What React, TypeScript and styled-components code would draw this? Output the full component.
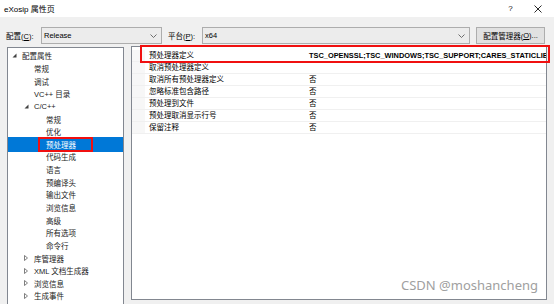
import React from 'react';
import styled, { createGlobalStyle } from 'styled-components';

// ── Global ─────────────────────────────────────────────────────────────────────

const GlobalStyle = createGlobalStyle`
  html, body {
    margin: 0;
    padding: 0;
  }
  body {
    width: 554px;
    height: 304px;
    overflow: hidden;
    background: #f0f0f0;
    font-family: "Liberation Sans", "Noto Sans CJK SC", sans-serif;
    color: #000;
  }
  * {
    box-sizing: border-box;
  }
`;

// ── Window chrome ──────────────────────────────────────────────────────────────

const Window = styled.div`
  display: flex;
  flex-direction: column;
  width: 554px;
  height: 304px;
  background: #f0f0f0;
  overflow: hidden;
`;

const TitleBar = styled.div`
  display: flex;
  align-items: center;
  height: 17px;
  padding: 0 3px 0 4px;
  background: #fff;
  font-size: 8px;
`;

const Title = styled.span`
  flex: 1;
`;

const TitleButton = styled.div`
  display: flex;
  align-items: center;
  justify-content: center;
  width: 27px;
  height: 17px;
  font-size: 8px;
  color: #111;
`;

// ── Toolbar ────────────────────────────────────────────────────────────────────

const Toolbar = styled.div`
  display: flex;
  align-items: center;
  height: 17px;
  margin: 10px 0 2px 6px;
  font-size: 7.5px;
`;

const Label = styled.span<{ $w: number }>`
  width: ${(p) => p.$w}px;
  white-space: nowrap;
`;

const Select = styled.div<{ $w: number }>`
  display: flex;
  align-items: center;
  justify-content: space-between;
  width: ${(p) => p.$w}px;
  height: 17px;
  margin-right: 6px;
  padding: 0 4px 0 2px;
  background: #ececec;
  border: 1px solid #adadad;
`;

const Button = styled.div`
  display: flex;
  align-items: center;
  justify-content: center;
  width: 69px;
  height: 17px;
  background: #e1e1e1;
  border: 1px solid #adadad;
  white-space: nowrap;
`;

// ── Panels ─────────────────────────────────────────────────────────────────────

const Main = styled.div`
  display: flex;
  align-items: flex-start;
  gap: 7px;
  padding-left: 7px;
`;

const TreePanel = styled.div`
  width: 117px;
  height: 270px;
  margin-top: 1px;
  padding-top: 1.5px;
  background: #fff;
  border: 1px solid #828790;
  overflow: hidden;
`;

const TreeRow = styled.div<{ $level: number; $selected?: boolean }>`
  position: relative;
  display: flex;
  align-items: center;
  height: 12.65px;
  padding-left: ${(p) => 1 + p.$level * 12}px;
  font-size: 7.5px;
  white-space: nowrap;
  color: ${(p) => (p.$selected ? '#fff' : '#1a1a1a')};
  background: ${(p) => (p.$selected ? '#0078d7' : 'transparent')};
  box-shadow: ${(p) =>
    p.$selected ? '0 -1px 0 #0078d7, 0 1px 0 #0078d7' : 'none'};
`;

const Toggle = styled.span`
  display: flex;
  align-items: center;
  justify-content: center;
  width: 10px;
  margin-right: 3px;
`;

const TreeMark = styled.div`
  position: absolute;
  left: 30px;
  top: -1px;
  width: 55px;
  height: 15px;
  border: 2px solid #f01010;
`;

const GridPanel = styled.div`
  position: relative;
  width: 416px;
  height: 254px;
  background: #fff;
  border: 1px solid #828790;
`;

const GridBody = styled.div`
  height: 100%;
  padding-top: 3px;
  overflow: hidden;
`;

const GridRow = styled.div`
  display: grid;
  grid-template-columns: 13px 161px 1fr;
  height: 12px;
  font-size: 7.5px;
  line-height: 11px;
  border-bottom: 1px solid #f0f0f0;
`;

const Gutter = styled.div`
  background: #f7f7f7;
`;

const NameCell = styled.div`
  padding-left: 4px;
  white-space: nowrap;
  overflow: hidden;
`;

const ValueCell = styled.div<{ $bold?: boolean }>`
  padding-left: 3px;
  white-space: nowrap;
  overflow: hidden;
  font-weight: ${(p) => (p.$bold ? 700 : 400)};
  font-size: ${(p) => (p.$bold ? '7.4px' : '7.5px')};
`;

const GridMark = styled.div`
  position: absolute;
  left: 8px;
  top: -2px;
  width: 410px;
  height: 18px;
  border: 2px solid #f01010;
`;

const Watermark = styled.div`
  position: absolute;
  right: 8px;
  bottom: 6px;
  font-family: "Noto Sans", sans-serif;
  font-size: 13px;
  line-height: 16px;
  color: #a0a0a0;
`;

// ── Icons ──────────────────────────────────────────────────────────────────────

const Chevron = () => (
  <svg width="7" height="4" viewBox="0 0 7 4">
    <polyline points="0.5,0.5 3.5,3.5 6.5,0.5" fill="none" stroke="#606060" strokeWidth="0.9" />
  </svg>
);

const CloseIcon = () => (
  <svg width="8" height="8" viewBox="0 0 8 8">
    <path d="M0.5 0.5L7.5 7.5M7.5 0.5L0.5 7.5" stroke="#111" strokeWidth="0.9" />
  </svg>
);

const Expanded = () => (
  <svg width="5" height="5" viewBox="0 0 5 5">
    <polygon points="4.5,0.5 4.5,4.5 0.5,4.5" fill="#404040" />
  </svg>
);

const Collapsed = () => (
  <svg width="4" height="6" viewBox="0 0 4 6">
    <polygon points="0.5,0.5 3.5,3 0.5,5.5" fill="none" stroke="#606060" strokeWidth="0.8" />
  </svg>
);

// ── Data ───────────────────────────────────────────────────────────────────────

type TreeItem = { text: string; level: number; toggle?: 'open' | 'closed'; selected?: boolean };

const tree: TreeItem[] = [
  { text: '配置属性', level: 0, toggle: 'open' },
  { text: '常规', level: 1 },
  { text: '调试', level: 1 },
  { text: 'VC++ 目录', level: 1 },
  { text: 'C/C++', level: 1, toggle: 'open' },
  { text: '常规', level: 2 },
  { text: '优化', level: 2 },
  { text: '预处理器', level: 2, selected: true },
  { text: '代码生成', level: 2 },
  { text: '语言', level: 2 },
  { text: '预编译头', level: 2 },
  { text: '输出文件', level: 2 },
  { text: '浏览信息', level: 2 },
  { text: '高级', level: 2 },
  { text: '所有选项', level: 2 },
  { text: '命令行', level: 2 },
  { text: '库管理器', level: 1, toggle: 'closed' },
  { text: 'XML 文档生成器', level: 1, toggle: 'closed' },
  { text: '浏览信息', level: 1, toggle: 'closed' },
  { text: '生成事件', level: 1, toggle: 'closed' },
];

const props: { name: string; value: string; bold?: boolean }[] = [
  { name: '预处理器定义', value: 'TSC_OPENSSL;TSC_WINDOWS;TSC_SUPPORT;CARES_STATICLIB', bold: true },
  { name: '取消预处理器定义', value: '' },
  { name: '取消所有预处理器定义', value: '否' },
  { name: '忽略标准包含路径', value: '否' },
  { name: '预处理到文件', value: '否' },
  { name: '预处理取消显示行号', value: '否' },
  { name: '保留注释', value: '否' },
];

// ── App ────────────────────────────────────────────────────────────────────────

export default function App() {
  return (
    <Window>
      <GlobalStyle />
      <TitleBar>
        <Title>eXosip 属性页</Title>
        <TitleButton>?</TitleButton>
        <TitleButton>
          <CloseIcon />
        </TitleButton>
      </TitleBar>

      <Toolbar>
        <Label $w={35}>
          配置(<u>C</u>):
        </Label>
        <Select $w={121}>
          <span>Release</span>
          <Chevron />
        </Select>
        <Label $w={34}>
          平台(<u>P</u>):
        </Label>
        <Select $w={268}>
          <span>x64</span>
          <Chevron />
        </Select>
        <Button>
          配置管理器(<u>O</u>)...
        </Button>
      </Toolbar>

      <Main>
        <TreePanel>
          {tree.map((item, i) => (
            <TreeRow key={i} $level={item.level} $selected={item.selected}>
              <Toggle>
                {item.toggle === 'open' && <Expanded />}
                {item.toggle === 'closed' && <Collapsed />}
              </Toggle>
              {item.text}
              {item.selected && <TreeMark />}
            </TreeRow>
          ))}
        </TreePanel>

        <GridPanel>
          <GridBody>
            {props.map((p) => (
              <GridRow key={p.name}>
                <Gutter />
                <NameCell>{p.name}</NameCell>
                <ValueCell $bold={p.bold}>{p.value}</ValueCell>
              </GridRow>
            ))}
          </GridBody>
          <GridMark />
          <Watermark>CSDN @moshancheng</Watermark>
        </GridPanel>
      </Main>
    </Window>
  );
}
